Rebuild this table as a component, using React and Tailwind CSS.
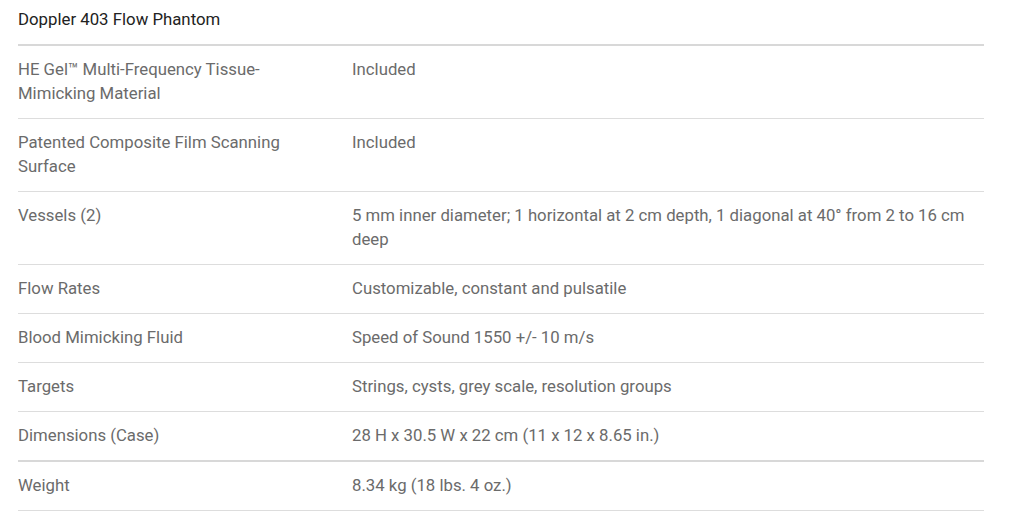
const specs = [
  ["HE Gel™ Multi-Frequency Tissue-Mimicking Material", "Included"],
  ["Patented Composite Film Scanning Surface", "Included"],
  [
    "Vessels (2)",
    "5 mm inner diameter; 1 horizontal at 2 cm depth, 1 diagonal at 40° from 2 to 16 cm deep",
  ],
  ["Flow Rates", "Customizable, constant and pulsatile"],
  ["Blood Mimicking Fluid", "Speed of Sound 1550 +/- 10 m/s"],
  ["Targets", "Strings, cysts, grey scale, resolution groups"],
  ["Dimensions (Case)", "28 H x 30.5 W x 22 cm (11 x 12 x 8.65 in.)"],
  ["Weight", "8.34 kg (18 lbs. 4 oz.)"],
];

export default function App() {
  return (
    <div className="min-h-screen bg-white font-['Roboto',sans-serif]">
      <div className="w-[966px] ml-[18px]">
        <div className="border-b-2 border-[#d8d8d8] pt-[8px] pb-[14px] text-[16.8px] leading-[22px] text-[#222]">
          Doppler 403 Flow Phantom
        </div>
        {specs.map(([label, value], i) => (
          <div
            key={label}
            className={`grid grid-cols-[334px_1fr] pt-[11px] pb-[13px] text-[16.75px] leading-6 text-[#6b6b6b] ${
              i === 6 ? "border-b-2 border-[#d8d8d8]" : "border-b border-[#dddddd]"
            }`}
          >
            <div className="pr-[30px]">{label}</div>
            <div>{value}</div>
          </div>
        ))}
      </div>
    </div>
  );
}
